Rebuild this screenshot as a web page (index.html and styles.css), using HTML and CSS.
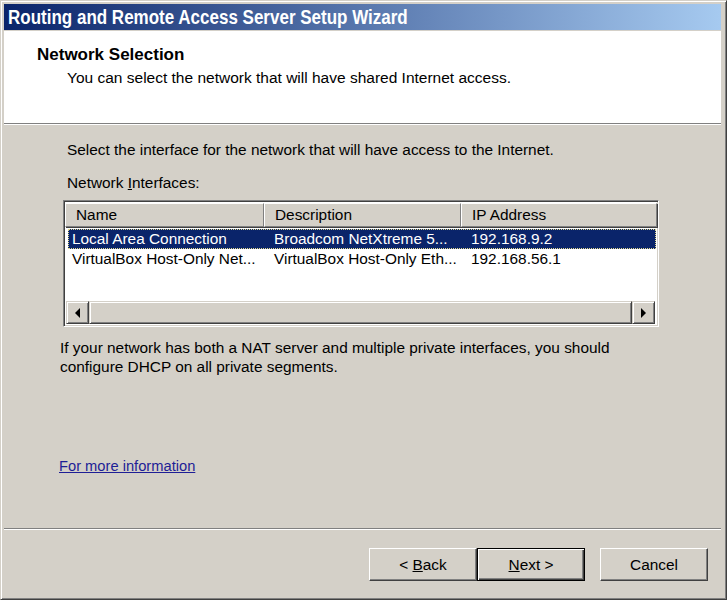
FILE: index.html
```html
<!DOCTYPE html>
<html lang="en">
<head>
    <meta charset="UTF-8">
    <title>Routing and Remote Access Server Setup Wizard</title>
    <link rel="stylesheet" href="styles.css">
</head>
<body>
    <div class="window">
        <div class="titlebar"><span class="title-text">Routing and Remote Access Server Setup Wizard</span></div>

        <div class="header">
            <div class="heading">Network Selection</div>
            <div class="subheading">You can select the network that will have shared Internet access.</div>
        </div>
        <div class="separator"></div>

        <div class="content">
            <p class="intro">Select the interface for the network that will have access to the Internet.</p>
            <p class="label">Network <u>I</u>nterfaces:</p>

            <div class="listbox">
                <div class="list-head">
                    <div class="col-head">Name</div>
                    <div class="col-head">Description</div>
                    <div class="col-head">IP Address</div>
                </div>
                <div class="rows">
                    <div class="row selected">
                        <span>Local Area Connection</span>
                        <span>Broadcom NetXtreme 5...</span>
                        <span>192.168.9.2</span>
                    </div>
                    <div class="row">
                        <span>VirtualBox Host-Only Net...</span>
                        <span>VirtualBox Host-Only Eth...</span>
                        <span>192.168.56.1</span>
                    </div>
                </div>
                <div class="hscroll">
                    <div class="scroll-btn"><span class="arrow left"></span></div>
                    <div class="thumb"></div>
                    <div class="scroll-btn"><span class="arrow right"></span></div>
                </div>
            </div>

            <p class="note">If your network has both a NAT server and multiple private interfaces, you should<br>configure DHCP on all private segments.</p>

            <a class="more" href="#">For more information</a>
        </div>
        <div class="separator"></div>

        <div class="buttons">
            <button class="btn back">&lt; <u>B</u>ack</button>
            <button class="btn next"><u>N</u>ext &gt;</button>
            <button class="btn cancel">Cancel</button>
        </div>
    </div>
</body>
</html>
```

FILE: styles.css
```css
body {
    margin: 0;
    font-family: "Liberation Sans", Arial, sans-serif;
    font-size: 15.4px;
    color: #000;
}

.window {
    width: 727px;
    height: 600px;
    box-sizing: border-box;
    padding: 3px 5px 3px 3px;
    background: #d4d0c8;
    border: 1px solid;
    border-color: #d4d0c8 #404040 #404040 #d4d0c8;
    box-shadow: inset 1px 1px #fff, inset -1px -1px #808080;
    display: flex;
    flex-direction: column;
}

.titlebar {
    height: 26px;
    line-height: 26px;
    padding-left: 4px;
    background: linear-gradient(to right, #0a246a, #a6caf0);
    color: #fff;
    font-weight: bold;
    font-size: 20px;
    white-space: nowrap;
}

/* narrow title face: squeeze the bold sans */
.title-text {
    display: inline-block;
    transform: scaleX(0.85);
    transform-origin: left center;
}

.header {
    margin-top: 1px;
    height: 92px;
    background: #fff;
    box-sizing: border-box;
    padding: 14px 0 0 33px;
}

.heading {
    font-weight: bold;
    font-size: 17px;
    line-height: 20px;
}

.subheading {
    margin-top: 4px;
    padding-left: 30px;
    font-size: 15.5px;
    line-height: 18px;
}

.separator {
    height: 1px;
    background: #808080;
    border-bottom: 1px solid #fff;
    flex-shrink: 0;
}

.content {
    flex: 1;
    padding: 16px 0 0 56px;
}

.content p {
    margin: 0;
    line-height: 18px;
}

.intro,
.label {
    padding-left: 7px;
}

.label {
    margin-top: 15px !important;
}

.listbox {
    margin: 8px 0 0 3px;
    width: 596px;
    height: 127px;
    box-sizing: border-box;
    background: #fff;
    border: 1px solid;
    border-color: #808080 #fff #fff #808080;
    box-shadow: inset 1px 1px #404040, inset -1px -1px #d4d0c8;
    padding: 2px 2px 2px 1px;
    display: flex;
    flex-direction: column;
}

.list-head {
    display: grid;
    grid-template-columns: 199px 197px 196px;
    height: 24px;
    flex-shrink: 0;
}

.col-head {
    background: #d4d0c8;
    border: 1px solid;
    border-color: #fff #808080 #808080 #fff;
    box-shadow: 1px 1px #404040;
    padding-left: 10px;
    line-height: 22px;
    white-space: nowrap;
    overflow: hidden;
}

.rows {
    flex: 1;
    padding: 2px 0 0 3px;
}

.row {
    display: grid;
    grid-template-columns: 196px 197px 195px;
    height: 20px;
    line-height: 18px;
    box-sizing: border-box;
    border: 1px solid transparent;
    white-space: nowrap;
}

.row span {
    padding-left: 9px;
    overflow: hidden;
}

.row span:first-child {
    padding-left: 3px;
}

.row.selected {
    background: #0a246a;
    color: #fff;
    border: 1px dotted #e0d890;
}

.hscroll {
    display: flex;
    height: 23px;
    flex-shrink: 0;
    margin-left: 1px;
    margin-right: 1px;
}

.scroll-btn,
.thumb {
    background: #d4d0c8;
    box-sizing: border-box;
    border: 1px solid;
    border-color: #d4d0c8 #404040 #404040 #d4d0c8;
    box-shadow: inset 1px 1px #fff, inset -1px -1px #808080;
}

.scroll-btn {
    width: 23px;
    display: flex;
    align-items: center;
    justify-content: center;
}

.thumb {
    flex: 1;
}

.arrow {
    width: 0;
    height: 0;
    border-top: 5px solid transparent;
    border-bottom: 5px solid transparent;
}

.arrow.left {
    border-right: 5px solid #000;
}

.arrow.right {
    border-left: 5px solid #000;
}

.note {
    margin-top: 11px !important;
    line-height: 19px !important;
    padding-left: 0;
}

.more {
    display: inline-block;
    margin-top: 81px;
    margin-left: -1px;
    color: #1e1e96;
    font-size: 14.7px;
    line-height: 18px;
}

.buttons {
    height: 66px;
    box-sizing: border-box;
    padding: 18px 13px 0 0;
    display: flex;
    justify-content: flex-end;
    align-items: flex-start;
}

.btn {
    width: 108px;
    height: 33px;
    font-family: "Liberation Sans", Arial, sans-serif;
    font-size: 15.4px;
    color: #000;
    background: #d4d0c8;
    border: 1px solid;
    border-color: #fff #404040 #404040 #fff;
    box-shadow: inset -1px -1px #808080;
    padding: 0;
}

.btn.next {
    border: 1px solid #000;
    box-shadow: inset 1px 1px #fff, inset -1px -1px #404040, inset -2px -2px #808080;
}

.btn.cancel {
    margin-left: 15px;
}
```
